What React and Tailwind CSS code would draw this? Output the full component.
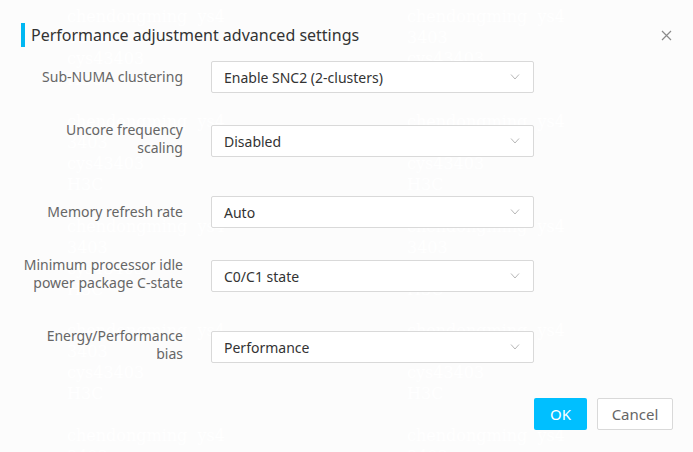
import React from "react";

const font = { fontFamily: '"Noto Sans", "Open Sans", Arial, sans-serif' };

const rows = [
  { label: ["Sub-NUMA clustering"], value: "Enable SNC2 (2-clusters)", mt: "mt-[14px]" },
  { label: ["Uncore frequency", "scaling"], value: "Disabled", mt: "mt-[28px]" },
  { label: ["Memory refresh rate"], value: "Auto", mt: "mt-[39px]" },
  { label: ["Minimum processor idle", "power package C-state"], value: "C0/C1 state", mt: "mt-[28px]" },
  { label: ["Energy/Performance", "bias"], value: "Performance", mt: "mt-[35px]" },
];

// faint watermark blocks behind the dialog
const Watermark = () => {
  const tops = [6, 111, 216, 320, 425];
  return (
    <div className="absolute inset-0 overflow-hidden pointer-events-none select-none">
      {tops.map((t) =>
        [67, 407].map((l) => (
          <div
            key={t + "-" + l}
            className="absolute text-[16px] leading-[21px] text-white"
            style={{ top: t, left: l, fontFamily: '"DejaVu Serif", serif' }}
          >
            <div>chendongming&nbsp;&nbsp;ys4</div>
            <div>3403</div>
            <div>cys43403</div>
            <div>H3C</div>
          </div>
        ))
      )}
    </div>
  );
};

const Chevron = () => (
  <svg width="10" height="6" viewBox="0 0 10 6" fill="none">
    <path d="M1 0.5L5 5L9 0.5" stroke="#b8b8b8" strokeWidth="1" />
  </svg>
);

const Select = ({ value, className = "" }) => (
  <div
    className={`w-[323px] h-[32px] shrink-0 flex items-center justify-between pl-[12px] pr-[13px] bg-white border border-[#d9d9d9] rounded-[2px] text-[14px] text-[#333] ${className}`}
  >
    <span>{value}</span>
    <Chevron />
  </div>
);

export default function App() {
  return (
    <div className="relative w-[693px] h-[452px] bg-[#fcfcfc] overflow-hidden" style={font}>
      <Watermark />

      <div className="relative flex flex-col">
        {/* Header */}
        <div className="flex items-center justify-between pt-[23px] pl-[21px] pr-[21px]">
          <div className="flex items-center gap-[6px]">
            <div className="w-[4px] h-[24px] bg-[#00b7f2]" />
            <h2 className="text-[16px] text-[#333] leading-[24px]">
              Performance adjustment advanced settings
            </h2>
          </div>
          <svg width="11" height="11" viewBox="0 0 11 11" className="mt-[1px]">
            <path d="M1 1L10 10M10 1L1 10" stroke="#8a8a8a" strokeWidth="1.2" />
          </svg>
        </div>

        {/* Form rows */}
        {rows.map((r) => {
          const twoLine = r.label.length > 1;
          return (
            <div
              key={r.value}
              className={`flex ${twoLine ? "items-start" : "items-center"} ${r.mt}`}
            >
              <div className="w-[183px] shrink-0 text-right text-[14px] leading-[18px] text-[#666]">
                {r.label.map((l) => (
                  <div key={l}>{l}</div>
                ))}
              </div>
              <Select value={r.value} className={twoLine ? "ml-[28px] mt-[4px]" : "ml-[28px]"} />
            </div>
          );
        })}

        {/* Footer */}
        <div className="flex justify-end gap-[10px] pr-[20px] mt-[35px]">
          <button className="w-[53px] h-[32px] rounded-[2px] bg-[#00bfff] text-white text-[15px]">
            OK
          </button>
          <button className="w-[76px] h-[32px] rounded-[2px] bg-white border border-[#d9d9d9] text-[#666] text-[15px]">
            Cancel
          </button>
        </div>
      </div>
    </div>
  );
}
